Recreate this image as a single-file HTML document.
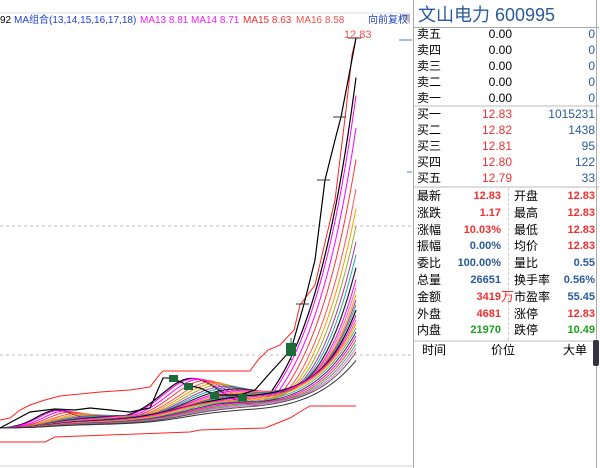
<!DOCTYPE html>
<html><head><meta charset="utf-8"><style>
*{margin:0;padding:0;box-sizing:border-box}
body{width:600px;height:468px;background:#fff;position:relative;overflow:hidden;font-family:"Liberation Sans","Noto Sans CJK SC",sans-serif}
#hdr{position:absolute;left:0;top:13px;width:410px;height:16px;font-size:10px;line-height:16px;white-space:nowrap;color:#000}
#hdr span{position:absolute;top:0}
#rp{position:absolute;left:413px;top:0;width:185px;height:468px;border-left:1px solid #aaa;}
.t{position:absolute;left:4px;top:3px;font-size:18px;color:#2a5a9a;line-height:24px;white-space:nowrap}
.row{position:absolute;left:0;width:185px;height:16px;font-size:12px;line-height:16px}
.row .a{position:absolute;left:3px}
.row .b{position:absolute;right:87px}
.row .c{position:absolute;right:4px;color:#2a5a9a}
.r2{position:absolute;left:0;width:185px;height:16px;font-size:12px;line-height:16px}
.r2 span{position:absolute}
.sep{position:absolute;left:0;width:185px;height:2px;background:#ddd}
.red{color:#f03030}.blue{color:#2a5a9a}.grn{color:#20a020}
.bold{font-weight:bold;font-size:11px}
</style></head><body>
<svg id="ch" width="412" height="468" style="position:absolute;left:0;top:0">
<line x1="0" y1="226" x2="412" y2="226" stroke="#bbb" stroke-dasharray="3,3"/>
<line x1="0" y1="355" x2="412" y2="355" stroke="#bbb" stroke-dasharray="3,3"/>
<line x1="0" y1="466" x2="412" y2="466" stroke="#ccc"/>
<line x1="0" y1="13" x2="410" y2="13" stroke="#ddd"/>
<polygon points="400,14 410,14 410,24" fill="#bbb"/>
<line x1="399" y1="40" x2="412" y2="40" stroke="#5580b0"/>
<line x1="407" y1="172" x2="412" y2="172" stroke="#5580b0"/>
<g id="g"></g>
<text x="344" y="38" font-size="11" fill="#f05050" font-family="Liberation Sans">12.83</text>
</svg>
<div id="hdr"><span style="left:0">92</span><span style="left:14px;color:#2040d0">MA组合(13,14,15,16,17,18)</span><span style="left:140px;color:#f020f0">MA13 8.81</span><span style="left:191px;color:#f020f0">MA14 8.71</span><span style="left:243px;color:#f03030">MA15 8.63</span><span style="left:296px;color:#f05050">MA16 8.58</span><span style="left:368px;color:#2040d0">向前复权</span></div>
<div id="rp">
<div class="t">文山电力 600995</div>
<div style="position:absolute;left:0;top:27px;width:185px;height:1px;background:#aaa"></div>
<div id="book"></div>
</div>
<div style="position:absolute;left:596px;top:0;width:1px;height:468px;background:#aaa"></div>
<div style="position:absolute;left:593px;top:340px;width:6px;height:26px;background:#334;border-radius:2px"></div>
<script>
var g=document.getElementById('g'),s='';
function P(pts,c,w){s+='<polyline fill="none" stroke="'+c+'" stroke-width="'+(w||1)+'" points="'+pts.map(function(p){return p[0]+','+(+p[1]).toFixed(1)}).join(' ')+'"/>';}
function sp(x){
 if(x<0)x=0;
 if(x<255)return 428-0.08*x-14*Math.exp(-Math.pow((x-50)/25,2))-35*Math.exp(-Math.pow((x-185)/40,2));
 var k=0.02;var y0=sp(254.99);return y0-(y0-38)*(Math.exp(k*(x-255))-1)/(Math.exp(k*101)-1);}
function ma(x,w){var t=0,n=0;for(var j=0;j<=w;j+=1){t+=sp(x-j);n++;}return t/n;}
var ends=[78,95,128,160,190,208,226,242,255,268,280,288,295,300,305,310,315,320,324,328,332,336,340,344,348,352,370];
var cols=['#000','#f0f','#f0f','#f33','#f55','#f90','#9a3','#a3a','#2aa','#222','#f0f','#f6a','#f90','#a3a','#3a8','#000','#f0f','#f55','#fa0','#5aa','#333','#f0f','#c60','#3aa','#f6c','#555','#333'];
for(var i=0;i<ends.length;i++){
 var best=1,bd=1e9;
 for(var w=1;w<300;w++){var d=Math.abs(ma(356,w)-ends[i]);if(d<bd){bd=d;best=w;}}
 var pts=[];
 for(var x=0;x<=356;x+=3){pts.push([x,ma(x,best)]);}
 pts.push([356,ma(356,best)]);
 P(pts,cols[i],(i==0||i==9||i==15)?1.2:1);
}
P([[0,420],[10,418],[20,410],[30,405],[45,400],[60,396],[100,392],[130,390],[150,387],[160,374],[163,371],[250,371],[258,360],[268,350],[280,345],[294,330],[300,305],[315,285],[335,200],[346,110],[352,55],[356,38]],'#f22');
P([[0,442],[45,442],[55,437],[190,432],[200,430],[265,428],[290,418],[303,410],[310,406],[356,406]],'#f22');
var cl=[[0,428],[15,420],[30,412],[55,409],[75,410],[90,408],[110,410],[130,412],[150,408],[163,378],[172,378],[187,385],[200,388],[215,395],[240,395],[255,390],[270,373],[291,350],[304,304],[315,260],[325,180],[335,140],[341,117],[350,70],[356,38]];
P(cl,'#000',1.2);
[[356,38],[341,117],[325,180],[304,304],[62,410],[171,378]].forEach(function(p){s+='<line x1="'+(p[0]-8)+'" y1="'+p[1]+'" x2="'+(p[0]+5)+'" y2="'+p[1]+'" stroke="#333"/>';});
[[169,375],[184,383],[210,392],[238,394]].forEach(function(p){s+='<rect x="'+p[0]+'" y="'+p[1]+'" width="9" height="7" fill="#1a6a3a"/>';});
s+='<rect x="286" y="343" width="10" height="13" fill="#1a6a3a"/><line x1="291" y1="338" x2="291" y2="360" stroke="#1a6a3a"/>';
g.innerHTML=s;
var b='',names=['卖五','卖四','卖三','卖二','卖一'];
for(var i=0;i<5;i++)b+='<div class="row" style="top:'+(26+i*16)+'px"><span class="a">'+names[i]+'</span><span class="b">0.00</span><span class="c">0</span></div>';
b+='<div class="sep" style="top:105px"></div>';
var bn=['买一','买二','买三','买四','买五'],bp=['12.83','12.82','12.81','12.80','12.79'],bv=['1015231','1438','95','122','33'];
for(var i=0;i<5;i++)b+='<div class="row" style="top:'+(106+i*16)+'px"><span class="a">'+bn[i]+'</span><span class="b red">'+bp[i]+'</span><span class="c">'+bv[i]+'</span></div>';
b+='<div class="sep" style="top:186px"></div>';
var L=[['最新','12.83','red','开盘','12.83','red'],['涨跌','1.17','red','最高','12.83','red'],['涨幅','10.03%','red','最低','12.83','red'],['振幅','0.00%','blue','均价','12.83','red'],['委比','100.00%','blue','量比','0.55','blue'],['总量','26651','blue','换手率','0.56%','blue'],['金额','3419万','red','市盈率','55.45','blue'],['外盘','4681','red','涨停','12.83','red'],['内盘','21970','grn','跌停','10.49','grn']];
for(var i=0;i<L.length;i++){var r=L[i],v=r[1].replace('万','<span style="font-weight:normal;font-size:13px">万</span>');
 b+='<div class="r2" style="top:'+(188+i*16.8)+'px"><span style="left:3px">'+r[0]+'</span><span class="bold '+r[2]+'" style="right:98px">'+v+'</span><span style="left:100px">'+r[3]+'</span><span class="bold '+r[5]+'" style="right:4px">'+r[4]+'</span></div>';}
b+='<div style="position:absolute;left:94px;top:188px;height:152px;border-left:1px dashed #ccc"></div>';
b+='<div class="sep" style="top:340px"></div>';
b+='<div class="r2" style="top:342px"><span style="left:8px">时间</span><span style="left:77px">价位</span><span style="right:12px">大单</span></div>';
document.getElementById('book').innerHTML=b;
</script>
</body></html>
